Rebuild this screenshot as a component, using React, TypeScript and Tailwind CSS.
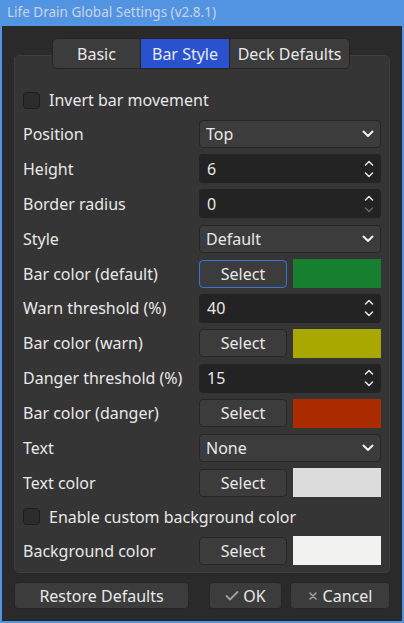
import React from "react";

function Chevron() {
  return (
    <svg width="12" height="8" viewBox="0 0 12 8" className="shrink-0">
      <polyline points="1.5,1.5 6,6 10.5,1.5" fill="none" stroke="#f0f0f0" strokeWidth="2" strokeLinecap="round" strokeLinejoin="round" />
    </svg>
  );
}

function SpinArrows({ downDisabled = false }: { downDisabled?: boolean }) {
  return (
    <div className="flex flex-col items-center gap-[6px]">
      <svg width="10" height="6" viewBox="0 0 10 6">
        <polyline points="1.5,5 5,1.5 8.5,5" fill="none" stroke="#e6e6e6" strokeWidth="1.5" strokeLinecap="round" strokeLinejoin="round" />
      </svg>
      <svg width="10" height="6" viewBox="0 0 10 6">
        <polyline points="1.5,1 5,4.5 8.5,1" fill="none" stroke={downDisabled ? "#666666" : "#e6e6e6"} strokeWidth="1.5" strokeLinecap="round" strokeLinejoin="round" />
      </svg>
    </div>
  );
}

function Checkbox({ label }: { label: string }) {
  return (
    <div className="h-[33px] flex items-center">
      <div className="w-[17px] h-[17px] rounded-[4px] border border-[#1e1e1e] bg-[#2c2c2c]" />
      <span className="ml-[9px]">{label}</span>
    </div>
  );
}

function Row({ label, children }: { label: string; children: React.ReactNode }) {
  return (
    <div className="h-[34.9px] flex items-center">
      <div className="w-[176px] shrink-0">{label}</div>
      <div className="flex-1 flex items-center">{children}</div>
    </div>
  );
}

function Combo({ value }: { value: string }) {
  return (
    <div className="w-full h-[28px] rounded-[4px] bg-[#3c3c3c] border border-[#262626] flex items-center justify-between pl-[6px] pr-[6px]">
      <span>{value}</span>
      <Chevron />
    </div>
  );
}

function Spin({ value, downDisabled = false }: { value: string; downDisabled?: boolean }) {
  return (
    <div className="w-full h-[29px] rounded-[4px] bg-[#232323] flex items-center justify-between pl-[8px] pr-[7px]">
      <span>{value}</span>
      <SpinArrows downDisabled={downDisabled} />
    </div>
  );
}

function ColorRow({ label, color, focused = false }: { label: string; color: string; focused?: boolean }) {
  return (
    <Row label={label}>
      <div
        className={
          focused
            ? "w-[88px] h-[28px] rounded-[4px] bg-[#3c3c3c] border border-[#3d72dc] flex items-center justify-center"
            : "w-[88px] h-[28px] rounded-[4px] bg-[#3c3c3c] border border-[#262626] flex items-center justify-center"
        }
      >
        Select
      </div>
      <div className="ml-[6px] flex-1 h-[29px]" style={{ backgroundColor: color }} />
    </Row>
  );
}

export default function App() {
  return (
    <div className="w-[404px] h-[623px] bg-[#5294e2] flex flex-col font-['Noto_Sans',sans-serif] text-[16px] text-[#e8e8e8] leading-none">
      <div className="h-[26px] shrink-0 flex items-center pl-[7px] text-[13.5px] text-[#c9d4e4]">
        Life Drain Global Settings (v2.8.1)
      </div>
      <div className="mx-[2px] mb-[2px] flex-1 bg-[#2a2a2a] flex flex-col">
        <div className="mt-[12px] ml-[50px] flex h-[31px] relative z-10">
          <div className="w-[89px] h-full flex items-center justify-center bg-[#3c3c3c] border border-[#242424] rounded-l-[5px]">Basic</div>
          <div className="w-[88px] h-full flex items-center justify-center bg-[#2a52cf] border-y border-[#242424]">Bar Style</div>
          <div className="w-[121px] h-full flex items-center justify-center bg-[#3c3c3c] border border-[#242424] rounded-r-[5px]">Deck Defaults</div>
        </div>
        <div className="-mt-[14px] mx-[12px] h-[518px] bg-[#353535] border border-[#3e3e3e] rounded-[5px] pt-[27.5px] pl-[8px] pr-[8px]">
          <Checkbox label="Invert bar movement" />
          <Row label="Position"><Combo value="Top" /></Row>
          <Row label="Height"><Spin value="6" /></Row>
          <Row label="Border radius"><Spin value="0" downDisabled /></Row>
          <Row label="Style"><Combo value="Default" /></Row>
          <ColorRow label="Bar color (default)" color="#178030" focused />
          <Row label="Warn threshold (%)"><Spin value="40" /></Row>
          <ColorRow label="Bar color (warn)" color="#a9a800" />
          <Row label="Danger threshold (%)"><Spin value="15" /></Row>
          <ColorRow label="Bar color (danger)" color="#aa2b00" />
          <Row label="Text"><Combo value="None" /></Row>
          <ColorRow label="Text color" color="#dcdcdc" />
          <Checkbox label="Enable custom background color" />
          <ColorRow label="Background color" color="#f2f2f0" />
        </div>
        <div className="mt-[9px] mx-[12px] flex h-[27px]">
          <div className="w-[175px] h-full rounded-[4px] bg-[#3c3c3c] border border-[#262626] flex items-center justify-center">Restore Defaults</div>
          <div className="ml-[20px] w-[73px] h-full rounded-[4px] bg-[#3c3c3c] border border-[#262626] flex items-center justify-center gap-[4px]">
            <svg width="14" height="12" viewBox="0 0 14 12">
              <polyline points="1.5,6 5,9.5 12.5,2" fill="none" stroke="#a0a0a0" strokeWidth="1.8" strokeLinecap="round" strokeLinejoin="round" />
            </svg>
            <span>OK</span>
          </div>
          <div className="ml-[8px] w-[100px] h-full rounded-[4px] bg-[#3c3c3c] border border-[#262626] flex items-center justify-center gap-[5px]">
            <svg width="10" height="10" viewBox="0 0 10 10">
              <path d="M2 2 L8 8 M8 2 L2 8" fill="none" stroke="#a0a0a0" strokeWidth="1.6" strokeLinecap="round" />
            </svg>
            <span>Cancel</span>
          </div>
        </div>
      </div>
    </div>
  );
}
